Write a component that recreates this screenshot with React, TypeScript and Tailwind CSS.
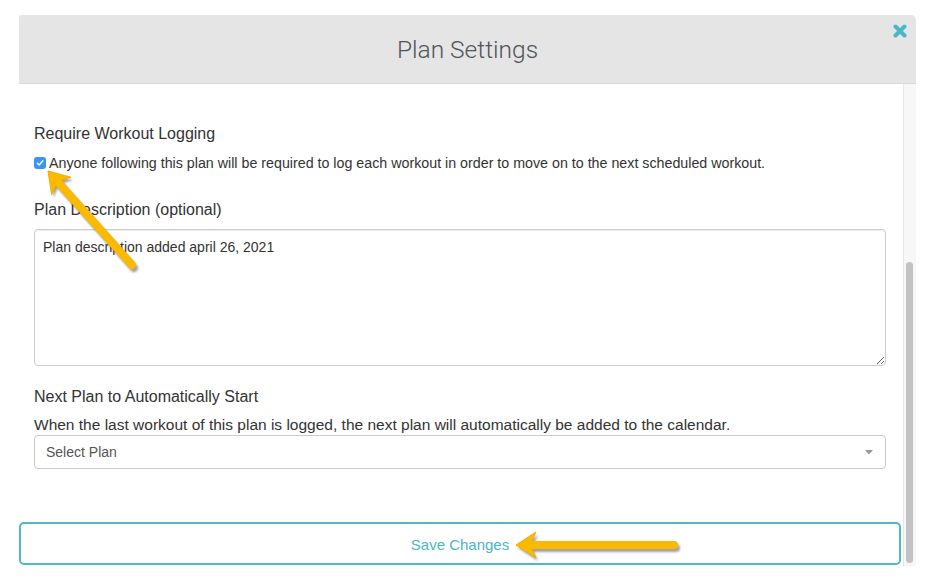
import React from 'react'

type Pt = [number, number]

// arrow head + shaft, computed from tip and tail
function arrowGeom(tip: Pt, tail: Pt, headLen = 20, half = 13, notch = 14) {
  const dx = tip[0] - tail[0]
  const dy = tip[1] - tail[1]
  const len = Math.hypot(dx, dy)
  const ux = dx / len
  const uy = dy / len
  const nx = -uy
  const ny = ux
  const bx = tip[0] - ux * headLen
  const by = tip[1] - uy * headLen
  const b1: Pt = [bx + nx * half, by + ny * half]
  const b2: Pt = [bx - nx * half, by - ny * half]
  const nt: Pt = [tip[0] - ux * notch, tip[1] - uy * notch]
  const head = `M${tip[0]},${tip[1]} L${b1[0]},${b1[1]} L${nt[0]},${nt[1]} L${b2[0]},${b2[1]} Z`
  return { head, start: nt }
}

function Arrow({ tip, tail }: { tip: Pt; tail: Pt }) {
  const { head, start } = arrowGeom(tip, tail)
  return (
    <g>
      <g transform="translate(2 3)" opacity="0.55" filter="url(#blur)">
        <path d={head} fill="#555" />
        <line x1={start[0]} y1={start[1]} x2={tail[0]} y2={tail[1]} stroke="#555" strokeWidth={8} strokeLinecap="round" />
      </g>
      <path d={head} fill="#fbb900" stroke="#f3ae00" strokeWidth={1} strokeLinejoin="round" />
      <line x1={start[0]} y1={start[1]} x2={tail[0]} y2={tail[1]} stroke="#fbb900" strokeWidth={8} strokeLinecap="round" />
    </g>
  )
}

export default function App() {
  return (
    <div className="relative h-[586px] w-[929px] overflow-hidden bg-white font-['Liberation_Sans',Arial,sans-serif] text-[#333]">
      <div className="pl-[19px] pt-[15px]">
        <div className="w-[897px] overflow-hidden rounded-tl-[2px] rounded-tr-[5px]">
          {/* header */}
          <div className="relative flex h-[69px] items-center justify-center border-b border-[#d8d8d8] bg-[#e5e5e5]">
            <h1 className="pt-[2px] font-['Roboto',sans-serif] text-[24.5px] font-light text-[#505459]">Plan Settings</h1>
            <button className="absolute right-[8px] top-[8px] flex h-[16px] w-[16px] items-center justify-center">
              <svg width="14" height="14" viewBox="0 0 14 14">
                <path d="M2.5 2.5 L11.5 11.5 M11.5 2.5 L2.5 11.5" stroke="#48b7c8" strokeWidth="4" strokeLinecap="round" />
              </svg>
            </button>
          </div>

          {/* body */}
          <div className="flex h-[482px]">
            <div className="w-[884px]">
              <div className="pl-[15px] pr-[17px] pt-[39px]">
                <p className="text-[16px] leading-[22px]">Require Workout Logging</p>
                <label className="mt-[8px] flex items-center text-[14.25px] leading-[20px]">
                  <span className="mr-[3px] flex h-[12px] w-[12px] items-center justify-center rounded-[3px] bg-[#3a96f5]">
                    <svg width="8" height="8" viewBox="0 0 8 8">
                      <path d="M1.3 4.2 L3.2 6 L6.8 1.8" fill="none" stroke="#fff" strokeWidth="1.4" strokeLinecap="round" strokeLinejoin="round" />
                    </svg>
                  </span>
                  Anyone following this plan will be required to log each workout in order to move on to the next scheduled workout.
                </label>

                <p className="mt-[26px] text-[16px] leading-[22px]">Plan Description (optional)</p>
                <textarea
                  className="mt-[8px] block h-[137px] w-full rounded-[4px] border border-[#cccccc] px-[8px] py-[7px] text-[14px] leading-[20px] text-[#333] shadow-[inset_0_1px_1px_rgba(0,0,0,0.075)] outline-none"
                  defaultValue="Plan description added april 26, 2021"
                />

                <p className="mt-[20px] text-[16px] leading-[22px]">Next Plan to Automatically Start</p>
                <p className="mt-[7px] text-[15.5px] leading-[20px]">
                  When the last workout of this plan is logged, the next plan will automatically be added to the calendar.
                </p>
                <div className="flex h-[34px] items-center justify-between rounded-[4px] border border-[#cccccc] pl-[11px] pr-[12px]">
                  <span className="pt-[1px] text-[14px] text-[#555]">Select Plan</span>
                  <svg width="8" height="5" viewBox="0 0 8 5">
                    <path d="M0 0 L8 0 L4 4.5 Z" fill="#999" />
                  </svg>
                </div>
              </div>

              <button className="mt-[53px] flex h-[43px] w-[882px] items-center justify-center rounded-[5px] border-2 border-[#4cb8c8] bg-white pt-[3px] text-[15px] text-[#4ab6c8]">
                Save Changes
              </button>
            </div>

            {/* scrollbar */}
            <div className="w-[13px] border-l border-[#e6e6e6] bg-[#f7f7f7]">
              <div className="ml-[2px] mt-[178px] h-[301px] w-[7px] rounded-full bg-[#c2c2c2]" />
            </div>
          </div>
        </div>
      </div>

      {/* annotation arrows */}
      <svg className="pointer-events-none absolute left-0 top-0" width="929" height="586">
        <defs>
          <filter id="blur" x="-20%" y="-20%" width="140%" height="140%">
            <feGaussianBlur stdDeviation="1.2" />
          </filter>
        </defs>
        <Arrow tip={[48, 171]} tail={[132, 265]} />
        <Arrow tip={[516, 545]} tail={[674, 545]} />
      </svg>
    </div>
  )
}
